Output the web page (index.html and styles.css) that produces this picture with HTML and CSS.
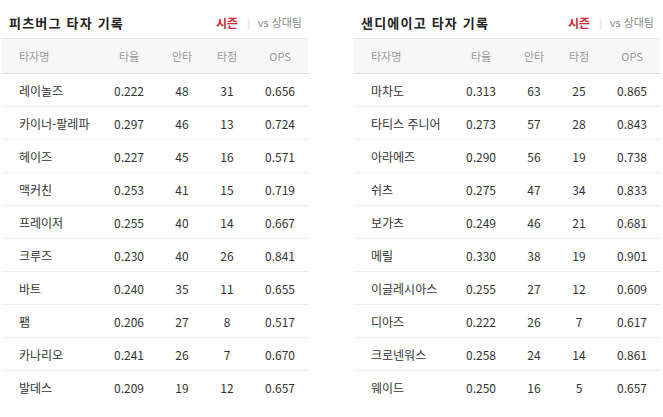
FILE: index.html
```html
<!DOCTYPE html>
<html lang="ko">
<head>
<meta charset="utf-8">
<link rel="stylesheet" href="styles.css">
</head>
<body>
<div class="wrap">
  <section class="box">
    <div class="head">
      <h3 class="title">피츠버그 타자 기록</h3>
      <div class="tabs"><span class="on">시즌</span><span class="bar">|</span><span class="off">vs 상대팀</span></div>
    </div>
    <table class="stats">
      <colgroup><col class="c-name"><col class="c-avg"><col class="c-h"><col class="c-rbi"><col class="c-ops"></colgroup>
      <thead><tr><th class="name">타자명</th><th>타율</th><th>안타</th><th>타점</th><th>OPS</th></tr></thead>
      <tbody>
        <tr><td class="name">레이놀즈</td><td>0.222</td><td>48</td><td>31</td><td>0.656</td></tr>
        <tr><td class="name">카이너-팔레파</td><td>0.297</td><td>46</td><td>13</td><td>0.724</td></tr>
        <tr><td class="name">헤이즈</td><td>0.227</td><td>45</td><td>16</td><td>0.571</td></tr>
        <tr><td class="name">맥커친</td><td>0.253</td><td>41</td><td>15</td><td>0.719</td></tr>
        <tr><td class="name">프레이저</td><td>0.255</td><td>40</td><td>14</td><td>0.667</td></tr>
        <tr><td class="name">크루즈</td><td>0.230</td><td>40</td><td>26</td><td>0.841</td></tr>
        <tr><td class="name">바트</td><td>0.240</td><td>35</td><td>11</td><td>0.655</td></tr>
        <tr><td class="name">팸</td><td>0.206</td><td>27</td><td>8</td><td>0.517</td></tr>
        <tr><td class="name">카나리오</td><td>0.241</td><td>26</td><td>7</td><td>0.670</td></tr>
        <tr><td class="name">발데스</td><td>0.209</td><td>19</td><td>12</td><td>0.657</td></tr>
      </tbody>
    </table>
  </section>
  <section class="box">
    <div class="head">
      <h3 class="title">샌디에이고 타자 기록</h3>
      <div class="tabs"><span class="on">시즌</span><span class="bar">|</span><span class="off">vs 상대팀</span></div>
    </div>
    <table class="stats">
      <colgroup><col class="c-name"><col class="c-avg"><col class="c-h"><col class="c-rbi"><col class="c-ops"></colgroup>
      <thead><tr><th class="name">타자명</th><th>타율</th><th>안타</th><th>타점</th><th>OPS</th></tr></thead>
      <tbody>
        <tr><td class="name">마차도</td><td>0.313</td><td>63</td><td>25</td><td>0.865</td></tr>
        <tr><td class="name">타티스 주니어</td><td>0.273</td><td>57</td><td>28</td><td>0.843</td></tr>
        <tr><td class="name">아라에즈</td><td>0.290</td><td>56</td><td>19</td><td>0.738</td></tr>
        <tr><td class="name">쉬츠</td><td>0.275</td><td>47</td><td>34</td><td>0.833</td></tr>
        <tr><td class="name">보가츠</td><td>0.249</td><td>46</td><td>21</td><td>0.681</td></tr>
        <tr><td class="name">메릴</td><td>0.330</td><td>38</td><td>19</td><td>0.901</td></tr>
        <tr><td class="name">이글레시아스</td><td>0.255</td><td>27</td><td>12</td><td>0.609</td></tr>
        <tr><td class="name">디아즈</td><td>0.222</td><td>26</td><td>7</td><td>0.617</td></tr>
        <tr><td class="name">크로넨워스</td><td>0.258</td><td>24</td><td>14</td><td>0.861</td></tr>
        <tr><td class="name">웨이드</td><td>0.250</td><td>16</td><td>5</td><td>0.657</td></tr>
      </tbody>
    </table>
  </section>
</div>
</body>
</html>
```

FILE: styles.css
```css
html, body {
  margin: 0;
  padding: 0;
  background: #fff;
}
body {
  font-family: "Noto Sans CJK KR", "Noto Sans", sans-serif;
  color: #333;
}
.wrap {
  display: flex;
  gap: 46px;
  padding-left: 2px;
}
.box {
  width: 306px;
}
.head {
  height: 38px;
  display: flex;
  align-items: center;
  justify-content: space-between;
  padding: 6px 6px 0 7px;
  box-sizing: border-box;
}
.title {
  margin: 0;
  font-size: 13px;
  font-weight: bold;
  color: #222;
  letter-spacing: 1.2px;
}
.tabs {
  font-size: 11px;
  display: flex;
  align-items: center;
}
.tabs .on {
  color: #d7262e;
  font-weight: bold;
  font-size: 12px;
}
.tabs .bar {
  color: #d5d5d5;
  margin: 0 8px 0 9px;
  font-size: 10px;
}
.tabs .off {
  color: #888;
}
.stats {
  width: 306px;
  border-collapse: collapse;
  table-layout: fixed;
}
.c-name { width: 94px; }
.c-avg { width: 66px; }
.c-h { width: 40px; }
.c-rbi { width: 50px; }
.c-ops { width: 56px; }
.stats th {
  height: 34px;
  background: #f7f7f7;
  border-top: 1px solid #e6e6e6;
  border-bottom: 1px solid #dcdcdc;
  font-size: 11px;
  font-weight: normal;
  color: #999;
  text-align: center;
  padding: 0;
}
.stats td {
  height: 32px;
  border-bottom: 1px solid #eee;
  font-size: 12px;
  color: #333;
  text-align: center;
  padding: 0;
  white-space: nowrap;
}
.stats tbody tr:last-child td {
  border-bottom: none;
}
.stats .name {
  text-align: left;
  padding-left: 17px;
}
```
